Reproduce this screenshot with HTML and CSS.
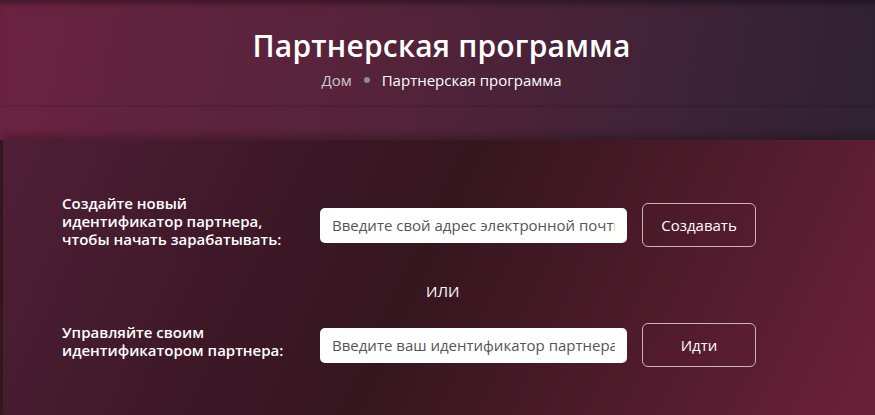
FILE: index.html
```html
<!DOCTYPE html>
<html lang="ru">
<head>
  <meta charset="UTF-8">
  <title>Партнерская программа</title>
  <link rel="stylesheet" href="styles.css">
</head>
<body>

  <div class="hero">
    <div class="hero-inner">
      <h1>Партнерская программа</h1>
      <div class="crumbs">
        <a href="#">Дом</a>
        <span class="dot"></span>
        <span class="current">Партнерская программа</span>
      </div>
    </div>
    <div class="hero-strip"></div>
  </div>

  <div class="panel">
    <div class="form-row">
      <label for="email">Создайте новый идентификатор партнера, чтобы начать зарабатывать:</label>
      <input type="text" id="email" placeholder="Введите свой адрес электронной почты">
      <button class="outline-btn">Создавать</button>
    </div>

    <div class="or">или</div>

    <div class="form-row">
      <label for="partner-id">Управляйте своим идентификатором партнера:</label>
      <input type="text" id="partner-id" placeholder="Введите ваш идентификатор партнера">
      <button class="outline-btn">Идти</button>
    </div>
  </div>

</body>
</html>
```

FILE: styles.css
```css
body {
  margin: 0;
  font-family: "Open Sans", "Noto Sans", sans-serif;
  background-color: #3a1822;
  color: white;
  overflow: hidden;
}
.hero {
  background: linear-gradient(100deg, #6a2340 0%, #54233a 45%, #2f2233 100%);
}
.hero-inner {
  height: 105px;
  padding-left: 8px;
  text-align: center;
  box-shadow: inset 0 7px 6px -4px rgba(0,0,0,0.4), 0 1px 3px rgba(0,0,0,0.18);
  position: relative;
}
h1 {
  margin: 0;
  padding-top: 26px;
  font-size: 30px;
  font-weight: 600;
  line-height: 40px;
  letter-spacing: 0.2px;
}
.crumbs {
  margin-top: 4px;
  font-size: 15px;
  display: flex;
  justify-content: center;
  align-items: center;
  gap: 12px;
}
.crumbs a {
  color: #cfc6cc;
  text-decoration: none;
}
.dot {
  width: 6px;
  height: 6px;
  border-radius: 50%;
  background-color: #8e8a8e;
}
.hero-strip {
  height: 35px;
}
.panel {
  margin-left: 3px;
  height: 275px;
  padding: 54px 0 0 59px;
  box-sizing: border-box;
  background: linear-gradient(115deg, #4f1f37 0%, #3a1724 35%, #35161f 48%, #6a2039 100%);
  box-shadow: 0 -4px 8px rgba(0,0,0,0.25);
}
.form-row {
  display: flex;
  align-items: center;
}
.form-row label {
  width: 258px;
  padding-right: 30px;
  box-sizing: border-box;
  margin-bottom: 8px;
  font-size: 15px;
  font-weight: 600;
  line-height: 18px;
}
.form-row input {
  width: 307px;
  height: 35px;
  padding: 0 12px;
  box-sizing: border-box;
  border: none;
  border-radius: 5px;
  font-family: inherit;
  font-size: 15px;
  color: #444;
  background-color: white;
}
.form-row input::placeholder {
  color: #555;
}
.outline-btn {
  margin-left: 15px;
  width: 114px;
  height: 44px;
  border: 1px solid #cfb0bd;
  border-radius: 6px;
  background: transparent;
  color: white;
  font-family: inherit;
  font-size: 15px;
  cursor: pointer;
}
.or {
  margin: 25px 0 22px;
  padding-left: 364px;
  font-size: 15px;
  line-height: 20px;
  text-transform: uppercase;
}
```
